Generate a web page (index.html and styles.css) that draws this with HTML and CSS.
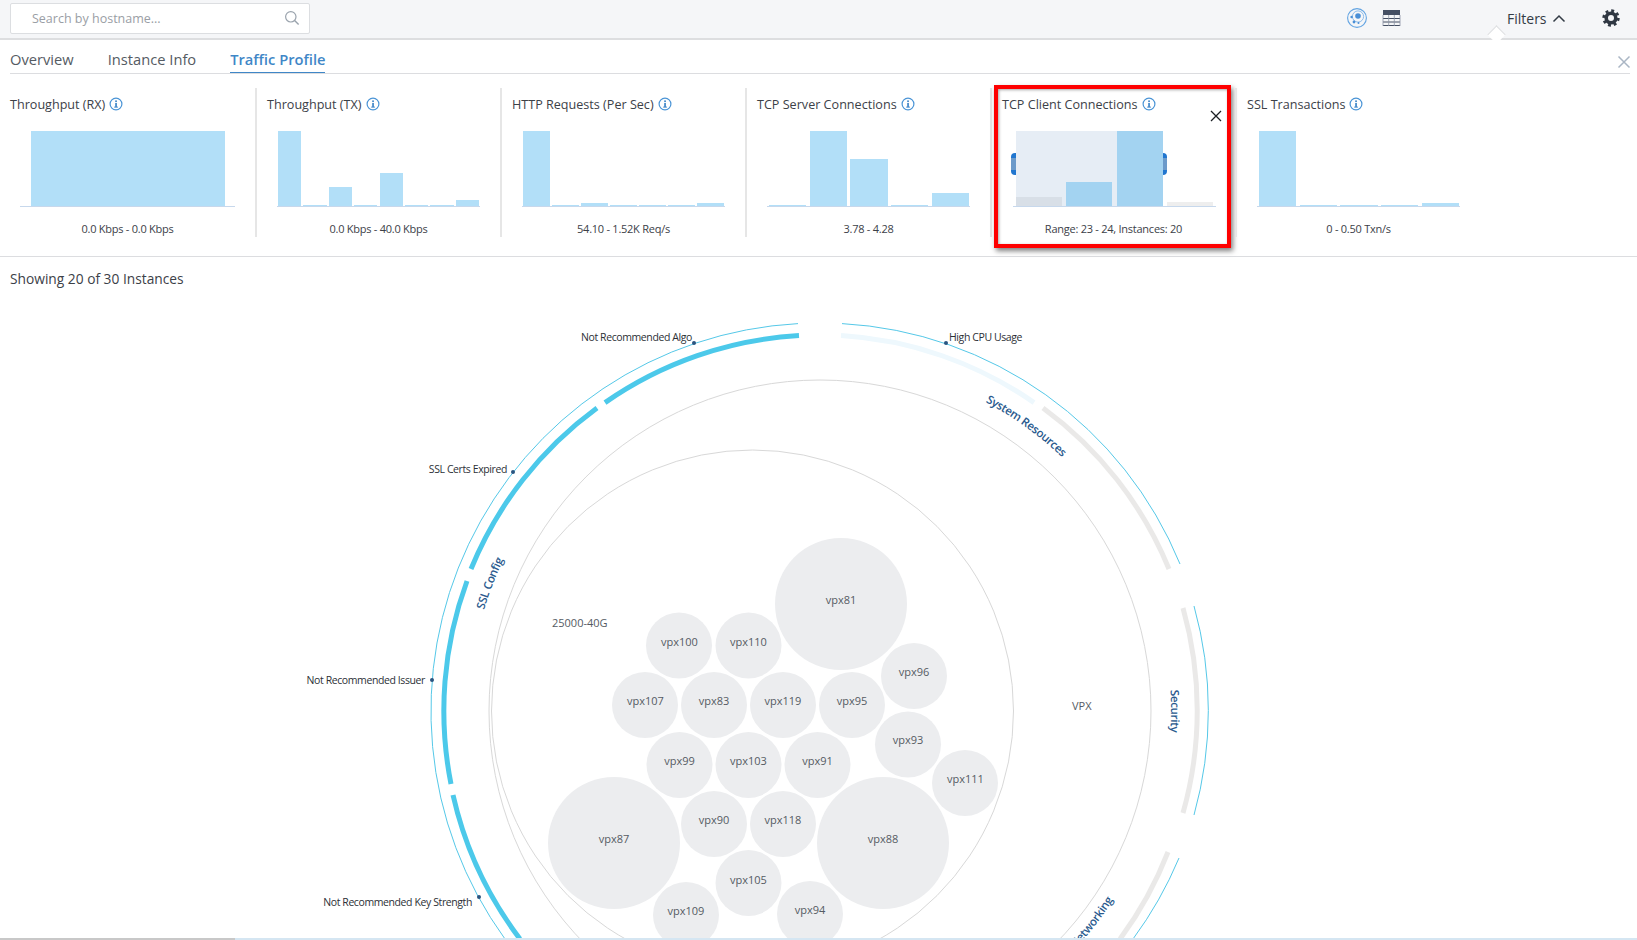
FILE: index.html
```html
<!DOCTYPE html>
<html lang="en">
<head>
<meta charset="utf-8">
<title>Traffic Profile</title>
<link rel="stylesheet" href="styles.css">
</head>
<body>
<svg class="defs" width="0" height="0" aria-hidden="true">
  <symbol id="info" viewBox="0 0 14 14">
    <circle cx="7" cy="7" r="5.9" fill="none" stroke="#4a94d6" stroke-width="1.2"/>
    <rect x="6.2" y="5.9" width="1.7" height="4.2" fill="#3f86c8"/>
    <rect x="6.2" y="3.4" width="1.7" height="1.6" fill="#3f86c8"/>
    <rect x="5.2" y="9.6" width="3.7" height="1" fill="#3f86c8"/>
  </symbol>
</svg>

<header class="topbar">
  <div class="search">
    <span class="search-text">Search by hostname...</span>
    <svg class="search-icon" width="16" height="16" viewBox="0 0 16 16"><circle cx="6.8" cy="6.8" r="5.2" fill="none" stroke="#9aa3ad" stroke-width="1.2"/><path d="M10.6 10.6 L14.6 14.6" stroke="#9aa3ad" stroke-width="1.4"/></svg>
  </div>
  <div class="top-icons">
    <svg width="22" height="22" viewBox="0 0 22 22"><circle cx="11" cy="11" r="9.4" fill="none" stroke="#63a4e2" stroke-width="1.1"/><circle cx="12" cy="9.5" r="5.6" fill="none" stroke="#8dbdec" stroke-width="1"/><circle cx="12" cy="9" r="2.8" fill="#4a8fd6"/><circle cx="5.6" cy="10" r="1.2" fill="#4a8fd6"/><circle cx="8" cy="15" r="1.4" fill="#4a8fd6"/><circle cx="12.5" cy="16" r="1" fill="#4a8fd6"/></svg>
    <svg width="19" height="19" viewBox="0 0 19 19"><rect x="1" y="1" width="17" height="5" fill="#454f63"/><path d="M1 9.5H18M1 13H18M1 16.5H18" stroke="#454f63" stroke-width="1"/><path d="M1 6V17M6.7 6V17M12.3 6V17M18 6V17" stroke="#8c93a3" stroke-width="0.8"/></svg>
  </div>
  <div class="filters">
    <span>Filters</span>
    <svg width="14" height="9" viewBox="0 0 14 9"><path d="M1.5 7.5 L7 2 L12.5 7.5" fill="none" stroke="#333b45" stroke-width="1.5"/></svg>
    <span class="notch"></span>
  </div>
  <svg class="gear" width="18" height="18" viewBox="0 0 18 18"><circle cx="9" cy="9" r="4.8" fill="none" stroke="#2f3742" stroke-width="3.6"/><circle cx="9" cy="9" r="7.4" fill="none" stroke="#2f3742" stroke-width="2.6" stroke-dasharray="2.9 2.91"/></svg>
</header>

<nav class="tabs">
  <a class="tab">Overview</a>
  <a class="tab">Instance Info</a>
  <a class="tab active">Traffic Profile</a>
  <svg class="tabs-close" width="14" height="14" viewBox="0 0 14 14"><path d="M1.5 1.5 L12.5 12.5 M12.5 1.5 L1.5 12.5" stroke="#aab6c4" stroke-width="1.5"/></svg>
</nav>

<section class="metrics">
  <div class="metric first">
    <h3 class="metric-title">Throughput (RX) <svg class="info"><use href="#info"/></svg></h3>
    <div class="chart wide"><div class="bars pad-rx">
      <i class="bar" style="height:75px"></i>
    </div></div>
    <p class="metric-range">0.0 Kbps - 0.0 Kbps</p>
  </div>
  <div class="metric">
    <h3 class="metric-title">Throughput (TX) <svg class="info"><use href="#info"/></svg></h3>
    <div class="chart"><div class="bars gap-s">
      <i class="bar" style="height:75px"></i><i class="bar" style="height:1px"></i><i class="bar" style="height:19px"></i><i class="bar" style="height:1px"></i><i class="bar" style="height:33px"></i><i class="bar" style="height:1px"></i><i class="bar" style="height:1px"></i><i class="bar" style="height:6px"></i>
    </div></div>
    <p class="metric-range">0.0 Kbps - 40.0 Kbps</p>
  </div>
  <div class="metric">
    <h3 class="metric-title">HTTP Requests (Per Sec) <svg class="info"><use href="#info"/></svg></h3>
    <div class="chart"><div class="bars gap-s">
      <i class="bar" style="height:75px"></i><i class="bar" style="height:1px"></i><i class="bar" style="height:3px"></i><i class="bar" style="height:1px"></i><i class="bar" style="height:1px"></i><i class="bar" style="height:1px"></i><i class="bar" style="height:3px"></i>
    </div></div>
    <p class="metric-range">54.10 - 1.52K Req/s</p>
  </div>
  <div class="metric">
    <h3 class="metric-title">TCP Server Connections <svg class="info"><use href="#info"/></svg></h3>
    <div class="chart"><div class="bars gap-m">
      <i class="bar" style="height:1px"></i><i class="bar" style="height:75px"></i><i class="bar" style="height:47px"></i><i class="bar" style="height:1px"></i><i class="bar" style="height:13px"></i>
    </div></div>
    <p class="metric-range">3.78 - 4.28</p>
  </div>
  <div class="metric selected">
    <h3 class="metric-title">TCP Client Connections <svg class="info"><use href="#info"/></svg></h3>
    <div class="chart"><div class="brush"><span class="handle left"></span><span class="handle right"></span></div><div class="bars gap-l">
      <i class="bar dim-in" style="height:9px"></i><i class="bar on" style="height:24px"></i><i class="bar on" style="height:75px"></i><i class="bar dim" style="height:4px"></i>
    </div></div>
    <p class="metric-range">Range: 23 - 24, Instances: 20</p>
    <span class="highlight"></span>
    <svg class="clear" width="12" height="12" viewBox="0 0 12 12"><path d="M1 1 L11 11 M11 1 L1 11" stroke="#1b1f24" stroke-width="1.3"/></svg>
  </div>
  <div class="metric">
    <h3 class="metric-title">SSL Transactions <svg class="info"><use href="#info"/></svg></h3>
    <div class="chart"><div class="bars gap-m">
      <i class="bar" style="height:75px"></i><i class="bar" style="height:1px"></i><i class="bar" style="height:1px"></i><i class="bar" style="height:1px"></i><i class="bar" style="height:3px"></i>
    </div></div>
    <p class="metric-range">0 - 0.50 Txn/s</p>
  </div>
</section>

<p class="summary">Showing 20 of 30 Instances</p>

<svg class="diagram" width="1637" height="648" viewBox="0 290 1637 648">
  <defs>
    <path id="p-ssl" d="M484 610 A351 351 0 0 1 820 360"/>
    <path id="p-sys" d="M985.5 402 A351 351 0 0 1 1171 711"/>
    <path id="p-sec" d="M1170.4 690 A351 351 0 0 1 1100 922"/>
    <path id="p-net" d="M960 1030.7 A349 349 0 0 0 1113 900"/>
  </defs>

  <g class="guide">
    <circle cx="820" cy="711" r="331"/>
    <circle cx="752.5" cy="711" r="261"/>
  </g>

  <g class="ring-thin">
    <path d="M798 323.6 A388 388 0 0 0 505 939"/>
    <path d="M842 323.6 A388 388 0 0 1 1180 564"/>
    <path d="M1194 606 A388 388 0 0 1 1194 815"/>
    <path d="M1179 858 A388 388 0 0 1 1133 939"/>
  </g>

  <g class="ring-on">
    <path d="M799 335.6 A376 376 0 0 0 605 402.6"/>
    <path d="M597 408 A376 376 0 0 0 471 569"/>
    <path d="M467 581 A376 376 0 0 0 451 784"/>
    <path d="M453 795 A376 376 0 0 0 520 939"/>
  </g>
  <path class="ring-pale" d="M841 335.6 A376 376 0 0 1 1034 402.6"/>
  <g class="ring-off">
    <path d="M1043 408 A376 376 0 0 1 1169 569"/>
    <path d="M1183 608 A376 376 0 0 1 1183 813"/>
    <path d="M1168 852 A376 376 0 0 1 1120 939"/>
  </g>

  <g class="group-label">
    <text><textPath href="#p-ssl">SSL Config</textPath></text>
    <text><textPath href="#p-sys">System Resources</textPath></text>
    <text><textPath href="#p-sec">Security</textPath></text>
    <text text-anchor="end"><textPath href="#p-net" startOffset="100%">Networking</textPath></text>
  </g>

  <g class="dot">
    <circle cx="694" cy="343" r="2"/>
    <circle cx="513" cy="472" r="2"/>
    <circle cx="432" cy="680" r="2"/>
    <circle cx="479" cy="897" r="2"/>
    <circle cx="946" cy="343" r="2"/>
  </g>
  <g class="issue-label">
    <text x="692" y="341" text-anchor="end">Not Recommended Algo</text>
    <text x="507" y="473" text-anchor="end">SSL Certs Expired</text>
    <text x="425" y="684" text-anchor="end">Not Recommended Issuer</text>
    <text x="472" y="906" text-anchor="end">Not Recommended Key Strength</text>
    <text x="949" y="341">High CPU Usage</text>
  </g>

  <g class="cluster-label">
    <text x="552" y="627">25000-40G</text>
    <text x="1072" y="710">VPX</text>
  </g>

  <g class="bubbles">
    <circle cx="841" cy="604" r="66"/>
    <circle cx="614" cy="843" r="66"/>
    <circle cx="883" cy="843" r="66"/>
    <circle cx="679" cy="645.5" r="33"/>
    <circle cx="748.5" cy="645.5" r="33"/>
    <circle cx="645" cy="705" r="33"/>
    <circle cx="714" cy="705" r="33"/>
    <circle cx="783" cy="705" r="33"/>
    <circle cx="852" cy="705" r="33"/>
    <circle cx="914" cy="676" r="33"/>
    <circle cx="908" cy="744.5" r="33"/>
    <circle cx="965" cy="783" r="33"/>
    <circle cx="679.5" cy="765" r="33"/>
    <circle cx="748.5" cy="765" r="33"/>
    <circle cx="817.5" cy="765" r="33"/>
    <circle cx="714" cy="824" r="33"/>
    <circle cx="783" cy="824" r="33"/>
    <circle cx="748.5" cy="883" r="33"/>
    <circle cx="686" cy="915" r="33"/>
    <circle cx="810" cy="914" r="33"/>
  </g>
  <g class="bubble-label">
    <text x="841" y="604">vpx81</text>
    <text x="614" y="843">vpx87</text>
    <text x="883" y="843">vpx88</text>
    <text x="679.5" y="646">vpx100</text>
    <text x="748.5" y="646">vpx110</text>
    <text x="645.5" y="705">vpx107</text>
    <text x="714" y="705">vpx83</text>
    <text x="783" y="705">vpx119</text>
    <text x="852" y="705">vpx95</text>
    <text x="914" y="676">vpx96</text>
    <text x="908" y="744">vpx93</text>
    <text x="965.5" y="783">vpx111</text>
    <text x="679.5" y="765">vpx99</text>
    <text x="748.5" y="765">vpx103</text>
    <text x="817.5" y="765">vpx91</text>
    <text x="714" y="824">vpx90</text>
    <text x="783" y="824">vpx118</text>
    <text x="748.5" y="884">vpx105</text>
    <text x="686" y="915">vpx109</text>
    <text x="810" y="914">vpx94</text>
  </g>
</svg>

<footer class="strip"><span class="strip-grey"></span><span class="strip-blue"></span></footer>
</body>
</html>
```

FILE: styles.css
```css
* { box-sizing: border-box; }

html, body {
  margin: 0;
  height: 940px;
  overflow: hidden;
  background: #fff;
  font-family: "Open Sans", "Noto Sans", sans-serif;
  color: #3c4148;
}

.defs { position: absolute; }

.topbar {
  height: 40px;
  display: flex;
  align-items: center;
  padding: 0 0 2px 10px;
  background: #f5f6f8;
  border-bottom: 2px solid #dddee0;
}

.search {
  width: 300px;
  height: 31px;
  display: flex;
  align-items: center;
  justify-content: space-between;
  padding: 0 9px 0 21px;
  background: #fff;
  border: 1px solid #dcdee1;
  border-radius: 2px;
  font-size: 12.5px;
  color: #9a9ea5;
}

.top-icons {
  margin-left: 1036px;
  display: flex;
  align-items: center;
  gap: 14px;
}

.filters {
  position: relative;
  margin-left: 106px;
  display: flex;
  align-items: center;
  gap: 5px;
  font-size: 14px;
  color: #333b45;
}

.notch {
  position: absolute;
  left: -19px;
  top: 19px;
  width: 13px;
  height: 13px;
  margin-left: 2px;
  background: #fff;
  border-left: 1px solid #dddee0;
  border-top: 1px solid #dddee0;
  transform: rotate(45deg);
}

.gear { margin-left: 36px; }

.tabs {
  position: relative;
  height: 34px;
  margin: 0 7px 0 10px;
  display: flex;
  gap: 34px;
  border-bottom: 1px solid #dcdde0;
  font-size: 14.7px;
  color: #555b63;
}

.tab {
  padding-top: 9px;
  line-height: 21px;
}

.tab.active {
  color: #3f87c7;
  font-weight: 600;
  border-bottom: 1px solid #3f87c7;
}

.tabs-close {
  position: absolute;
  right: -1px;
  top: 15px;
}

.metrics {
  height: 183px;
  display: flex;
  padding-top: 14px;
  border-bottom: 1px solid #dcdde0;
}

.metric {
  position: relative;
  width: 245px;
  height: 149px;
  padding-left: 10px;
  border-left: 2px solid #e6e6e6;
}

.metric.first {
  width: 255px;
  padding-left: 10px;
  border-left: 0;
}

.metric-title {
  margin: 7px 0 0;
  display: flex;
  align-items: center;
  gap: 4px;
  height: 18px;
  font-size: 12.6px;
  font-weight: 400;
  color: #3c4148;
  white-space: nowrap;
}

.info { width: 14px; height: 14px; }

.chart {
  position: relative;
  width: 203px;
  height: 76px;
  margin: 18px 0 0 10px;
  display: flex;
  flex-direction: column;
  justify-content: flex-end;
}

.chart.wide {
  width: 215px;
  margin-left: 10px;
}

.selected .chart { margin-left: 10.5px; }

.bars {
  position: relative;
  height: 76px;
  display: flex;
  align-items: flex-end;
  padding: 0 1px;
  border-bottom: 1px solid #c7d8ec;
}

.pad-rx { padding: 0 10px 0 11px; }
.gap-s { gap: 2.2px; }
.gap-m { gap: 3.4px; padding: 0 1px 0 2px; }
.gap-l { gap: 4.4px; padding: 0 2px 0 3px; }

.bar {
  flex: 1;
  display: block;
  background: #b2dff8;
}

.bar.on { background: #a3d3f1; }
.bar.dim-in { background: #d8dfe7; }
.bar.dim { background: #eeeeee; }

.brush {
  position: absolute;
  left: 3px;
  top: 0;
  width: 146px;
  height: 75px;
  background: #e6edf5;
}

.handle {
  position: absolute;
  top: 22px;
  width: 5px;
  height: 22px;
  background: linear-gradient(#2176cf 0 22%, #6c9aca 22% 78%, #2176cf 78%);
}

.handle.left { left: -5px; border-radius: 4px 0 0 4px; }
.handle.right { right: -5px; border-radius: 0 4px 4px 0; }

.metric-range {
  margin: 14px 0 0;
  width: 223px;
  text-align: center;
  font-size: 11px;
  letter-spacing: -0.25px;
  line-height: 16px;
  color: #3c4148;
}

.first .metric-range { width: 235px; }

.highlight {
  position: absolute;
  left: 2px;
  top: -3px;
  width: 237px;
  height: 163px;
  border: 4px solid #fe0000;
  box-shadow: 2px 3px 5px rgba(0, 0, 0, 0.5), inset 1px 1px 3px rgba(0, 0, 0, 0.35);
}

.clear {
  position: absolute;
  left: 217.5px;
  top: 22px;
}

.summary {
  margin: 0;
  height: 33px;
  padding: 12px 0 0 10px;
  font-size: 13.75px;
  line-height: 20px;
  color: #3c4148;
}

.diagram { display: block; }

.guide circle { fill: none; stroke: #d8d8d8; stroke-width: 1; }
.ring-thin path { fill: none; stroke: #55c8e8; stroke-width: 1; }
.ring-on path { fill: none; stroke: #4cc9ea; stroke-width: 5; }
.ring-pale { fill: none; stroke: #eef8fd; stroke-width: 5; }
.ring-off path { fill: none; stroke: #eae9e8; stroke-width: 5; }
.dot circle { fill: #2a5480; }

.group-label text {
  font-size: 11.5px;
  font-weight: 600;
  letter-spacing: -0.35px;
  fill: #2a5a8e;
}

.issue-label text {
  font-size: 10.5px;
  letter-spacing: -0.4px;
  fill: #2c3036;
}

.cluster-label text {
  font-size: 11px;
  fill: #555b63;
}

.bubbles circle { fill: #ecedef; }

.bubble-label text {
  font-size: 11px;
  text-anchor: middle;
  fill: #555b63;
}

.strip {
  height: 2px;
  display: flex;
}

.strip-grey { width: 235px; background: #c8c8c8; }
.strip-blue { flex: 1; background: #d5e6f2; }
```
